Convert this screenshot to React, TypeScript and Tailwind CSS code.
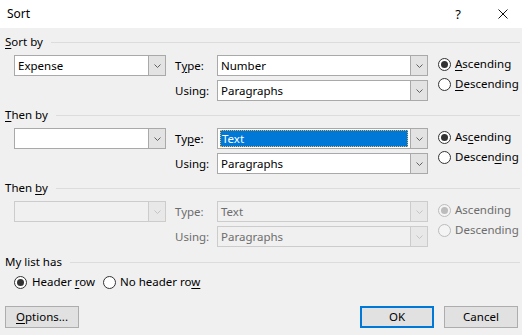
const font = { fontFamily: '"Segoe UI", "Noto Sans", "Open Sans", sans-serif' };

const Chevron = ({ disabled }: { disabled?: boolean }) => (
  <svg width="7" height="4" viewBox="0 0 7 4">
    <path d="M0.5 0.5 L3.5 3.5 L6.5 0.5" fill="none" stroke={disabled ? "#c4c4c4" : "#606060"} strokeWidth="1" />
  </svg>
);

const Combo = ({
  value,
  width,
  disabled,
  selected,
}: {
  value?: string;
  width: string;
  disabled?: boolean;
  selected?: boolean;
}) => (
  <div
    className={`${width} h-[21px] flex border ${
      disabled ? "border-[#cccccc] bg-[#f0f0f0] text-[#6d6d6d]" : "border-[#a9a9a9] bg-white text-black"
    }`}
  >
    <div className="flex-1 flex items-center px-[2px] min-w-0">
      {selected ? (
        <div className="flex-1 h-[17px] bg-[#0078d7] text-white flex items-center pl-[1px] border border-dotted border-[#f7b24a]">
          {value}
        </div>
      ) : (
        <span className="pl-[1px]">{value}</span>
      )}
    </div>
    <div
      className={`w-[17px] flex items-center justify-center border-l ${
        disabled ? "bg-[#e8e8e8] border-[#cccccc]" : "bg-[#e3e3e3] border-[#a9a9a9]"
      }`}
    >
      <Chevron disabled={disabled} />
    </div>
  </div>
);

const Radio = ({ checked, disabled }: { checked?: boolean; disabled?: boolean }) => (
  <span
    className={`w-[13px] h-[13px] rounded-full border flex items-center justify-center shrink-0 ${
      disabled ? "border-[#bcbcbc] bg-[#f4f4f4]" : "border-[#333333] bg-white"
    }`}
  >
    {checked && (
      <span className={`w-[7px] h-[7px] rounded-full ${disabled ? "bg-[#bcbcbc]" : "bg-[#333333]"}`} />
    )}
  </span>
);

const U = ({ children }: { children: React.ReactNode }) => (
  <span className="underline underline-offset-[2px] decoration-1">{children}</span>
);

const Section = ({
  label,
  value,
  type,
  typeLabel,
  ascLabel,
  descLabel,
  disabled,
  selected,
}: {
  label: React.ReactNode;
  value?: string;
  type: string;
  typeLabel: React.ReactNode;
  ascLabel: React.ReactNode;
  descLabel: React.ReactNode;
  disabled?: boolean;
  selected?: boolean;
}) => (
  <div>
    <div className="flex items-center h-[16px] gap-[8px]">
      <span>{label}</span>
      <div className="flex-1 h-px bg-[#dcdcdc]" />
    </div>
    <div className="mt-[5px] flex">
      <div className="pl-[9px]">
        <Combo value={value} width="w-[152px]" disabled={disabled} />
      </div>
      <div className={`ml-[9px] w-[42px] flex flex-col gap-[4px] ${disabled ? "text-[#6d6d6d]" : ""}`}>
        <div className="h-[21px] flex items-center">{typeLabel}</div>
        <div className="h-[21px] flex items-center">Using:</div>
      </div>
      <div className="flex flex-col gap-[4px]">
        <Combo value={type} width="w-[211px]" disabled={disabled} selected={selected} />
        <Combo value="Paragraphs" width="w-[211px]" disabled={disabled} />
      </div>
      <div className={`ml-[10px] -mt-[1px] flex flex-col ${disabled ? "text-[#6d6d6d]" : ""}`}>
        <div className="h-[20px] flex items-center gap-[4px]">
          <Radio checked disabled={disabled} />
          <span>{ascLabel}</span>
        </div>
        <div className="h-[20px] flex items-center gap-[4px]">
          <Radio disabled={disabled} />
          <span>{descLabel}</span>
        </div>
      </div>
    </div>
  </div>
);

export default function App() {
  return (
    <div className="w-[522px] h-[335px] bg-[#f0f0f0] text-[11.5px] text-black leading-none overflow-hidden" style={font}>
      {/* title bar */}
      <div className="h-[28px] bg-white flex items-center pl-[7px] pr-[14px] text-[12px]">
        <span className="flex-1">Sort</span>
        <span className="mr-[37px] text-[13px]">?</span>
        <svg width="10" height="10" viewBox="0 0 10 10">
          <path d="M0.5 0.5 L9.5 9.5 M9.5 0.5 L0.5 9.5" stroke="#111" strokeWidth="1" />
        </svg>
      </div>

      <div className="pt-[6px] pl-[5px] pr-[2px] flex flex-col gap-[6px]">
        <Section
          label={<><U>S</U>ort by</>}
          value="Expense"
          type="Number"
          typeLabel={<>T<U>y</U>pe:</>}
          ascLabel={<><U>A</U>scending</>}
          descLabel={<><U>D</U>escending</>}
        />
        <Section
          label={<><U>T</U>hen by</>}
          value=""
          type="Text"
          typeLabel={<>Ty<U>p</U>e:</>}
          ascLabel={<>As<U>c</U>ending</>}
          descLabel={<>Descen<U>d</U>ing</>}
          selected
        />
        <Section
          label={<>Then <U>b</U>y</>}
          type="Text"
          typeLabel="Type:"
          ascLabel="Ascending"
          descLabel="Descending"
          disabled
        />
      </div>

      {/* my list has */}
      <div className="mt-[7px] pl-[5px] pr-[2px]">
        <div className="flex items-center h-[16px] gap-[8px]">
          <span>My list has</span>
          <div className="flex-1 h-px bg-[#dcdcdc]" />
        </div>
        <div className="mt-[4px] h-[16px] pl-[9px] flex items-center">
          <div className="w-[89px] flex items-center gap-[5px]">
            <Radio checked />
            <span>Header <U>r</U>ow</span>
          </div>
          <div className="flex items-center gap-[4px]">
            <Radio />
            <span>No header ro<U>w</U></span>
          </div>
        </div>
      </div>

      {/* buttons */}
      <div className="mt-[16px] pl-[5px] pr-[4px] flex items-center">
        <button className="w-[74px] h-[22px] bg-[#e1e1e1] border border-[#adadad]">
          <U>O</U>ptions...
        </button>
        <div className="flex-1" />
        <button className="w-[74px] h-[22px] bg-[#e1e1e1] border-2 border-[#0078d7]">OK</button>
        <button className="ml-[10px] w-[74px] h-[22px] bg-[#e1e1e1] border border-[#adadad]">Cancel</button>
      </div>
    </div>
  );
}
